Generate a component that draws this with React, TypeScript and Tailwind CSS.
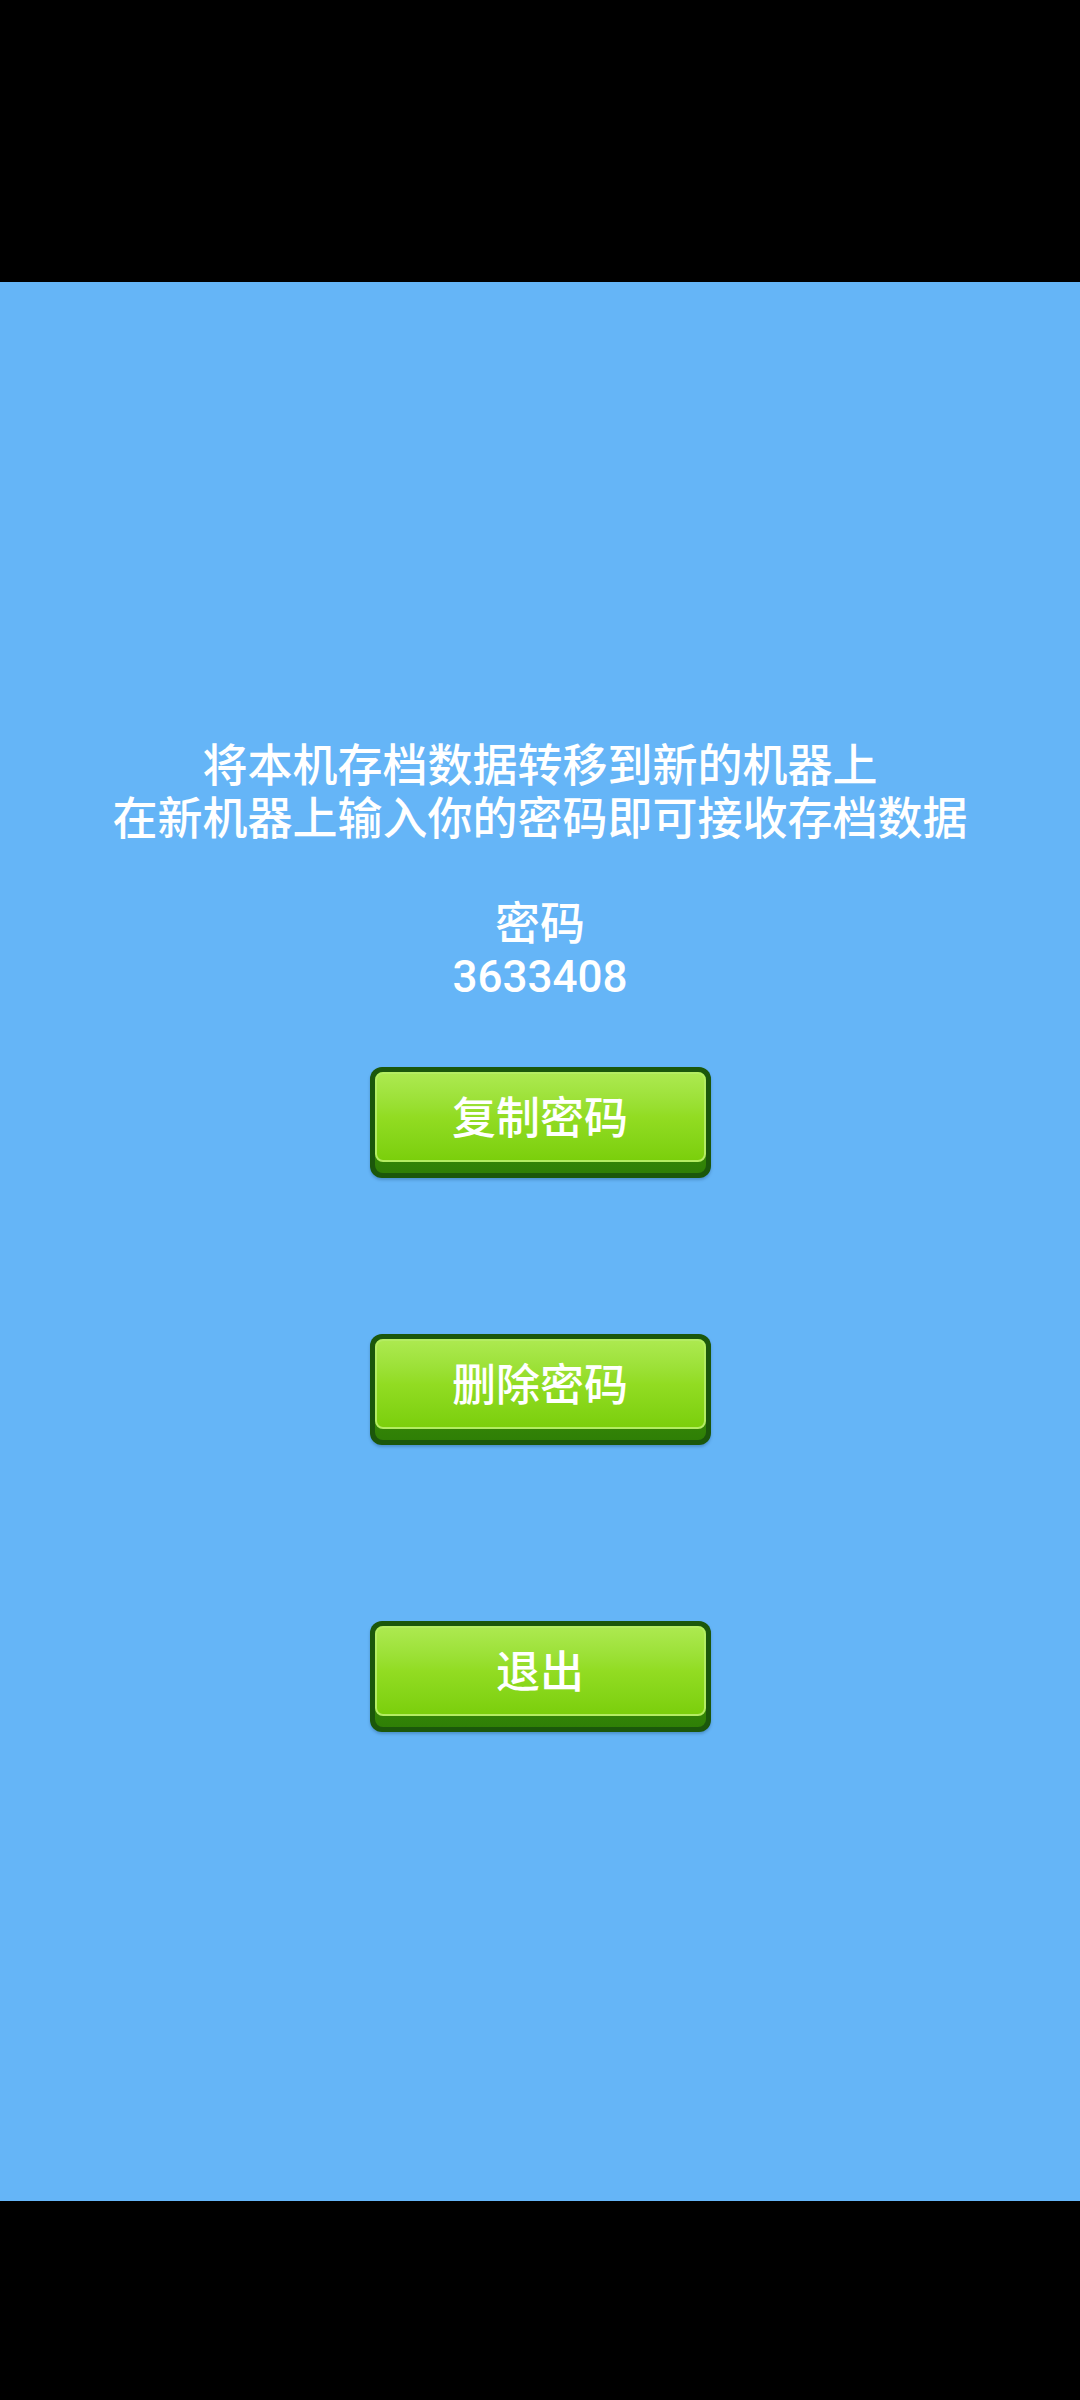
const font = { fontFamily: 'Roboto, "Noto Sans CJK SC", sans-serif' };

function GameButton({ label }: { label: string }) {
  return (
    <div className="w-[341px] h-[111px] rounded-[12px] bg-[#1b570b] p-[5px] shadow-[0_2px_3px_rgba(0,40,80,0.25)]">
      <div className="h-full rounded-[8px] bg-gradient-to-b from-[#4aa20a] to-[#2f7f06] pb-[11px]">
        <div className="h-full rounded-[8px] border-2 border-[#b4ec62] bg-gradient-to-b from-[#ace94f] via-[#92dc22] to-[#7bcf0b] flex items-center justify-center pt-[4px]">
          <span className="text-[44px] leading-none font-medium text-white">{label}</span>
        </div>
      </div>
    </div>
  );
}

export default function App() {
  return (
    <div className="w-[1080px] h-[2400px] bg-black flex flex-col" style={font}>
      <div className="h-[282px] shrink-0" />

      <div className="h-[1919px] shrink-0 bg-[#65b5f7] flex flex-col items-center">
        {/* Transfer info */}
        <div className="mt-[459px] text-center text-white text-[45px] font-medium leading-[52.5px]">
          <p>将本机存档数据转移到新的机器上</p>
          <p>在新机器上输入你的密码即可接收存档数据</p>
          <p>&nbsp;</p>
          <p>密码</p>
          <p className="text-[44px]">3633408</p>
        </div>

        {/* Buttons */}
        <div className="mt-[63px]">
          <GameButton label="复制密码" />
        </div>
        <div className="mt-[156px]">
          <GameButton label="删除密码" />
        </div>
        <div className="mt-[176px]">
          <GameButton label="退出" />
        </div>
      </div>

      <div className="flex-1" />
    </div>
  );
}
